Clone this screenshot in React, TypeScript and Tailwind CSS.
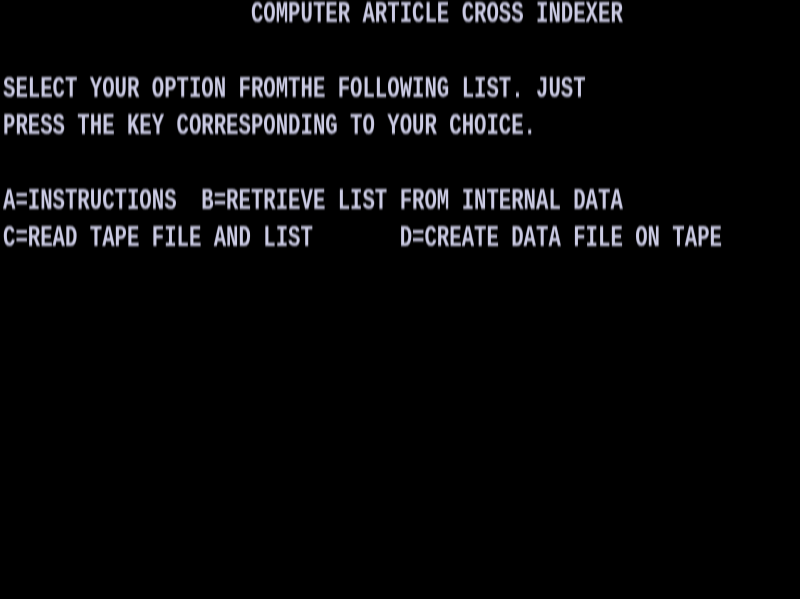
const rows: string[] = [
  "                    COMPUTER ARTICLE CROSS INDEXER",
  "",
  "SELECT YOUR OPTION FROMTHE FOLLOWING LIST. JUST",
  "PRESS THE KEY CORRESPONDING TO YOUR CHOICE.",
  "",
  "A=INSTRUCTIONS  B=RETRIEVE LIST FROM INTERNAL DATA",
  "C=READ TAPE FILE AND LIST       D=CREATE DATA FILE ON TAPE",
];

export default function App() {
  return (
    <div className="w-[800px] h-[599px] bg-black overflow-hidden pl-[3px]">
      {rows.map((line, i) => (
        <div key={i} className="h-[37.4px]">
          <span
            className="block whitespace-pre leading-none text-[20.67px] font-bold text-[#cbcbe4] origin-top scale-y-[1.44] blur-[0.6px]"
            style={{ fontFamily: '"Liberation Mono", monospace' }}
          >
            {line}
          </span>
        </div>
      ))}
    </div>
  );
}
